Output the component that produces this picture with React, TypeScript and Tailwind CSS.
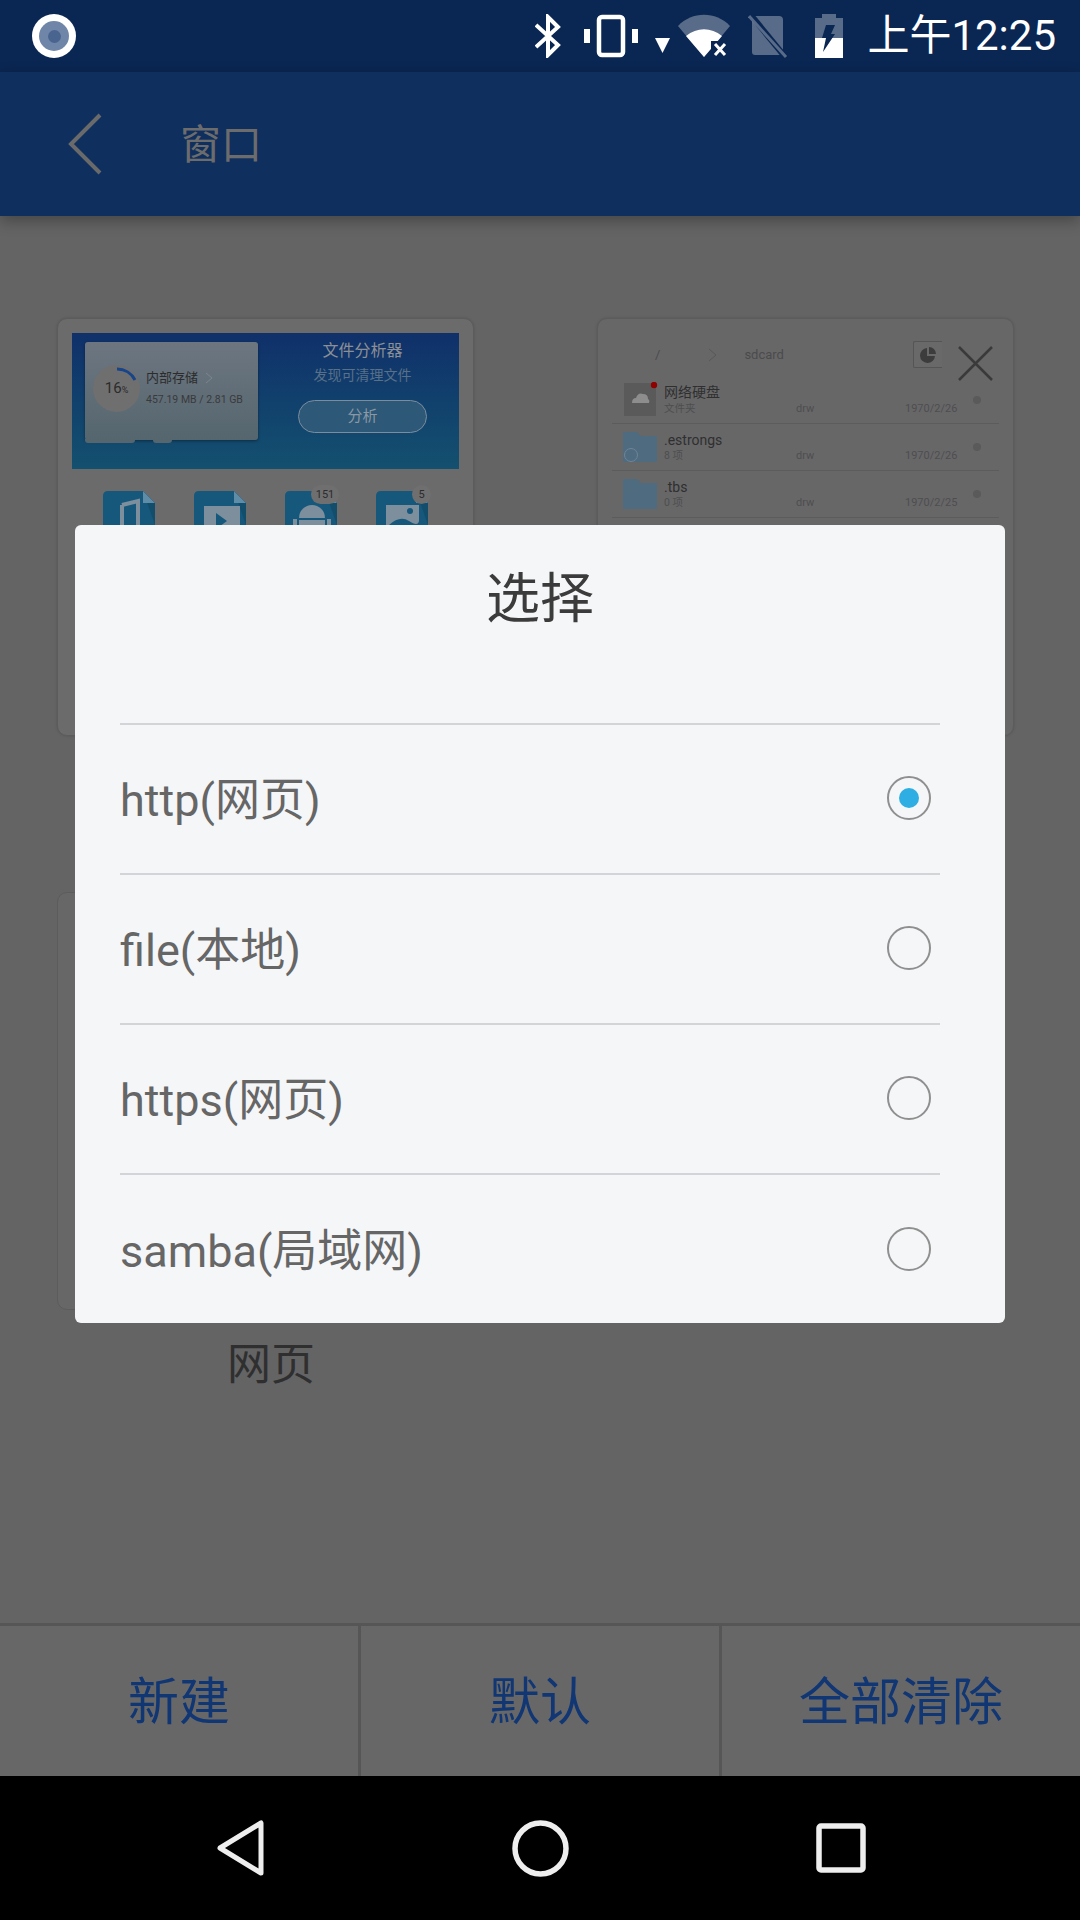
const cjk = "font-['Roboto','Noto_Sans_CJK_SC',sans-serif]";

const options = ['http(网页)', 'file(本地)', 'https(网页)', 'samba(局域网)'];

function StatusIcons() {
  return (
    <div className="flex items-center">
      {/* bluetooth */}
      <svg width="26" height="44" viewBox="0 0 26 44" className="mr-[23px]" fill="none" stroke="#fff" strokeWidth="4">
        <path d="M1 11 L23 31 L13 41 V3 L23 13 L1 33" />
      </svg>
      {/* vibrate */}
      <svg width="54" height="44" viewBox="0 0 54 44" className="mr-[17px]" fill="#fff">
        <rect x="0" y="15" width="6" height="14" />
        <rect x="48" y="15" width="6" height="14" />
        <rect x="15" y="3" width="24" height="38" rx="3" fill="none" stroke="#fff" strokeWidth="4.5" />
      </svg>
      {/* signal arrow */}
      <svg width="15" height="15" viewBox="0 0 15 15" className="mr-[8px] mt-[19px]" fill="#fff">
        <path d="M0 0 H15 L7.5 15 Z" />
      </svg>
      {/* wifi */}
      <svg width="52" height="44" viewBox="0 0 52 44" className="mr-[18px]">
        <path d="M0 12 C14 -3 38 -3 52 12 L26 43 Z" fill="#fff" fillOpacity="0.32" />
        <path d="M8 22 C19 13 33 13 44 22 L26 43 Z" fill="#fff" />
        <path d="M33 27 H52 V44 H33 Z" fill="#0a2652" />
        <path d="M37 30 L47 41 M47 30 L37 41" stroke="#fff" strokeWidth="3" />
      </svg>
      {/* sim */}
      <svg width="40" height="44" viewBox="0 0 40 44" className="mr-[27px]">
        <path d="M6 2 H31 Q35 2 35 6 V38 Q35 41 32 41 H7 Q4 41 4 38 V6 Z" fill="#fff" fillOpacity="0.32" />
        <path d="M2 0 L38 44" stroke="#0a2652" strokeWidth="6" />
        <path d="M1 2 L38 43" stroke="#fff" strokeOpacity="0.32" strokeWidth="3" />
      </svg>
      {/* battery */}
      <svg width="28" height="44" viewBox="0 0 28 44" className="mr-[24px]">
        <path d="M7 0 H21 V4 H28 V44 H0 V4 H7 Z" fill="#fff" fillOpacity="0.32" />
        <path d="M0 24 H28 V44 H0 Z" fill="#fff" />
        <path d="M11 11 H20 L16 20 H20 L8 38 L11 24 H7 Z" fill="#0a2652" />
      </svg>
      <span className={`text-[42px] leading-[44px] text-white ${cjk} whitespace-nowrap`}>上午12:25</span>
    </div>
  );
}

function FileTile({ children }: { children: React.ReactNode }) {
  return (
    <div className="relative w-[52px] h-[60px] overflow-hidden">
      <svg width="52" height="60" viewBox="0 0 52 60">
        <path d="M5 0 H40 L52 12 V60 H0 V5 Q0 0 5 0 Z" fill="#15587b" />
        <path d="M40 0 L52 12 V34 Z" fill="#134d6c" />
        <path d="M40 0 L52 12 H40 Z" fill="#5f8ca7" />
        {children}
      </svg>
    </div>
  );
}

function AnalyzerCard() {
  return (
    <div className="w-[417px] h-[418px] rounded-[10px] bg-[#6b6b6c] border border-[#5c5c5d] shadow-[0_0_3px_rgba(0,0,0,0.15)] px-[14px] py-[14px]">
      <div className="h-[136px] flex bg-gradient-to-b from-[#10306a] to-[#14506f] pl-[13px] pt-[9px]">
        <div className="relative shrink-0 w-[173px] h-[98px] rounded-[3px] bg-gradient-to-b from-[#6d7680] to-[#55666f] shadow-[0_1px_3px_rgba(0,0,0,0.4)] flex items-start pl-[8px] pt-[23px] gap-[6px]">
          <div className="absolute left-0 top-[97px] w-[50px] h-[4px] rounded-b-[3px] bg-[#55666f]" />
          <div className="absolute left-[68px] top-[97px] w-[19px] h-[4px] rounded-b-[3px] bg-[#55666f]" />
          <div className="w-[47px] h-[47px] rounded-full bg-[#6f6f70] flex items-center justify-center shrink-0 relative">
            <svg width="47" height="47" viewBox="0 0 47 47" className="absolute inset-0">
              <path d="M24 4 A20 20 0 0 1 42 15" fill="none" stroke="#16458c" strokeWidth="3" />
            </svg>
            <span className={`text-[15px] text-[#2b2b2b] ${cjk}`}>16<span className="text-[9px]">%</span></span>
          </div>
          <div className={cjk}>
            <div className="text-[13px] leading-[14px] mt-[6px] text-[#2c2c2c] whitespace-nowrap flex items-center">
              内部存储
              <svg width="8" height="12" viewBox="0 0 8 12" className="ml-[7px]" fill="none" stroke="#7c858f"><path d="M1 1 L7 6 L1 11" /></svg>
            </div>
            <div className="text-[10.5px] leading-[12px] mt-[9px] text-[#3a3a3a] whitespace-nowrap">457.19 MB / 2.81 GB</div>
          </div>
        </div>
        <div className={`w-[201px] shrink-0 pl-[8px] flex flex-col items-center ${cjk}`}>
          <div className="text-[16px] leading-[18px] text-[#8b8f95]">文件分析器</div>
          <div className="text-[14px] leading-[16px] mt-[7px] text-[#587088]">发现可清理文件</div>
          <div className="w-[129px] h-[33px] mt-[17px] shrink-0 rounded-full border border-[#7a8d9f] bg-[#2e5878] text-[15px] leading-[31px] text-center text-[#8a98a4]">分析</div>
        </div>
      </div>
      <div className="flex pl-[31px] gap-[39px] mt-[22px]">
        <FileTile><path d="M19 14 L35 10 V40 M19 14 V44" fill="none" stroke="#7d8f9d" strokeWidth="4" /></FileTile>
        <FileTile><rect x="10" y="15" width="36" height="30" fill="#7d8f9d" /><path d="M22 22 L33 30 L22 38 Z" fill="#15587b" /></FileTile>
        <div className="relative">
          <FileTile><path d="M14 27 A13 13 0 0 1 40 27 Z" fill="#7d8f9d" /><rect x="14" y="29" width="26" height="26" fill="#7d8f9d" /><rect x="8" y="28" width="4" height="18" fill="#7d8f9d" /><rect x="42" y="28" width="4" height="18" fill="#7d8f9d" /></FileTile>
          <span className={`absolute -top-[6px] left-[26px] w-[28px] h-[19px] rounded-full bg-[#6f6f70] text-[11px] leading-[19px] text-center text-[#2c2c2c] ${cjk}`}>151</span>
        </div>
        <div className="relative">
          <FileTile><rect x="10" y="14" width="33" height="46" fill="#7d8f9d" /><circle cx="34" cy="20" r="3" fill="#15587b" /><path d="M13 34 Q24 24 33 30 T43 30 V45 H13 Z" fill="#15587b" /></FileTile>
          <span className={`absolute -top-[6px] left-[36px] w-[19px] h-[19px] rounded-full bg-[#6f6f70] text-[11px] leading-[19px] text-center text-[#2c2c2c] ${cjk}`}>5</span>
        </div>
      </div>
    </div>
  );
}

function FileRow({ name, sub, date, folder, logo }: { name: string; sub: string; date: string; folder?: boolean; logo?: boolean }) {
  return (
    <div className="h-[47px] border-b border-[#5c5c5d] flex">
      <div className={`w-[52px] shrink-0 ${folder ? 'pl-[11px] pt-[8px]' : 'pl-[12px] pt-[5px]'}`}>
        {folder ? (
          <svg width="34" height="30" viewBox="0 0 34 30">
            <path d="M0 0 H14 L18 4 H34 V30 H0 Z" fill="#4f6b80" />
            {logo && <circle cx="8" cy="23" r="6.5" fill="none" stroke="#6f8497" strokeWidth="1" />}
          </svg>
        ) : (
          <svg width="36" height="36" viewBox="0 0 36 36">
            <rect y="1" width="32" height="33" fill="#5a5a5b" />
            <path d="M8 21 Q8 16 12 16 Q14 10 19 12 Q24 12 24 17 Q26 18 25 21 Z" fill="#8d8d8e" />
            <circle cx="30" cy="3" r="3.2" fill="#8f0000" />
          </svg>
        )}
      </div>
      <div className={`w-[132px] ${folder ? 'pt-[7px]' : 'pt-[6px]'} ${cjk}`}>
        <div className="text-[14px] leading-[18px] text-[#2f2f30] whitespace-nowrap">{name}</div>
        <div className={`text-[10.5px] leading-[14px] text-[#4e4e4f] ${folder ? '' : 'mt-[1px]'}`}>{sub}</div>
      </div>
      <div className={`w-[109px] pt-[25px] text-[11px] leading-[14px] text-[#4e4e4f] ${cjk}`}>drw</div>
      <div className={`w-[66px] pt-[25px] text-[11px] leading-[14px] text-[#4e4e4f] whitespace-nowrap ${cjk}`}>{date}</div>
      <div className="w-[8px] h-[8px] rounded-full bg-[#5a5a5b] ml-[2px] mt-[19px]" />
    </div>
  );
}

function BrowserCard() {
  return (
    <div className="relative w-[417px] h-[418px] rounded-[10px] bg-[#676768] border border-[#5c5c5d] shadow-[0_0_3px_rgba(0,0,0,0.15)] px-[14px] pt-[22px]">
      <div className={`flex items-center h-[27px] text-[13px] text-[#4b4b4c] ${cjk}`}>
        <span className="ml-[43px]">/</span>
        <svg width="10" height="14" viewBox="0 0 10 14" className="ml-[48px]" fill="none" stroke="#58585a"><path d="M1 1 L8 7 L1 13" /></svg>
        <span className="ml-[26px]">sdcard</span>
        <div className="ml-[129px] w-[29px] h-[27px] rounded-l-[2px] border border-r-0 border-[#555556] bg-[#69696a] flex items-center justify-center">
          <svg width="16" height="16" viewBox="0 0 16 16"><path d="M7 1 A7.5 7.5 0 1 0 15 9 H7 Z" fill="#3c3c3d" /><path d="M9 0 A7 7 0 0 1 16 7 H9 Z" fill="#3c3c3d" /></svg>
        </div>
      </div>
      <div className="absolute left-[360px] top-[27px]">
        <svg width="35" height="35" viewBox="0 0 35 35" stroke="#3a3a3b" strokeWidth="2.5"><path d="M1 1 L34 34 M34 1 L1 34" /></svg>
      </div>
      <div className="mt-[9px]">
        <FileRow name="网络硬盘" sub="文件夹" date="1970/2/26" />
        <FileRow name=".estrongs" sub="8 项" date="1970/2/26" folder logo />
        <FileRow name=".tbs" sub="0 项" date="1970/2/25" folder />
      </div>
    </div>
  );
}

function Radio({ checked }: { checked?: boolean }) {
  return (
    <div className="w-[44px] h-[44px] rounded-full border-2 border-[#8f8f8f] flex items-center justify-center">
      {checked && <div className="w-[20px] h-[20px] rounded-full bg-[#2eaee2]" />}
    </div>
  );
}

export default function App() {
  return (
    <div className={`relative w-[1080px] h-[1920px] overflow-hidden flex flex-col bg-[#646465] ${cjk}`}>
      <div className="h-[72px] bg-[#0a2652] flex items-center justify-between pl-[32px] pr-[24px] shrink-0">
        <div className="w-[44px] h-[44px] rounded-full bg-white flex items-center justify-center">
          <div className="w-[30px] h-[30px] rounded-full bg-[#6f86a8] flex items-center justify-center">
            <div className="w-[13px] h-[13px] rounded-full bg-[#49658f]" />
          </div>
        </div>
        <StatusIcons />
      </div>

      <div className="h-[144px] bg-[#0f2f5e] flex items-center shrink-0 shadow-[0_5px_14px_rgba(0,0,0,0.3)] relative z-10">
        <svg width="38" height="64" viewBox="0 0 38 64" className="ml-[66px]" fill="none" stroke="#6a6a6b" strokeWidth="4">
          <path d="M34 3 L5 32 L34 61" />
        </svg>
        <span className="ml-[76px] pt-[2px] text-[41px] leading-[48px] text-[#6c6c6d]">窗口</span>
      </div>

      <div className="flex-1 pt-[102px]">
        <div className="flex gap-[123px] pl-[57px]">
          <AnalyzerCard />
          <BrowserCard />
        </div>
        <div className="mt-[156px] pl-[57px]">
          <div className="w-[417px] h-[418px] rounded-[10px] border border-[#5c5c5d] bg-[#676768]" />
          <div className="w-[417px] pl-[11px] text-center text-[44px] leading-[56px] mt-[27px] text-[#2f2f30]">网页</div>
        </div>
      </div>

      <div className="h-[153px] shrink-0 border-t-[3px] border-[#565657] bg-[#676768] flex">
        {['新建', '默认', '全部清除'].map((label, i) => (
          <div key={label} className={`flex-1 flex items-center justify-center pt-[4px] text-[51px] text-[#113674] ${i < 2 ? 'border-r-[3px] border-[#565657]' : ''}`}>
            {label}
          </div>
        ))}
      </div>

      <div className="h-[144px] shrink-0 bg-black flex items-center pl-[217px]">
        <svg width="47" height="56" viewBox="0 0 47 56" fill="none" stroke="#eee" strokeWidth="5" strokeLinejoin="round">
          <path d="M44 3 V53 L3 28 Z" />
        </svg>
        <svg width="57" height="57" viewBox="0 0 57 57" className="ml-[248px]" fill="none" stroke="#eee" strokeWidth="5.5">
          <circle cx="28.5" cy="28.5" r="25.5" />
        </svg>
        <svg width="50" height="50" viewBox="0 0 50 50" className="ml-[247px]" fill="none" stroke="#eee" strokeWidth="5.5">
          <rect x="3" y="3" width="44" height="44" rx="2" />
        </svg>
      </div>

      <div className="absolute left-[75px] top-[525px] w-[930px] h-[798px] overflow-hidden rounded-[6px] bg-[#f5f6f8] pl-[45px] pr-[65px]">
        <div className="h-[200px] border-b-2 border-[#d3d4d7] text-center text-[54px] leading-[64px] pt-[43px] pl-[20px] text-[#3b3b3b]">选择</div>
        {options.map((opt, i) => (
          <div key={opt} className={`h-[150px] flex items-center justify-between ${i < 3 ? 'border-b-2 border-[#d3d4d7]' : ''}`}>
            <span className="pt-[3px] text-[45px] text-[#666666]">{opt}</span>
            <div className="mr-[9px] mb-[2px]"><Radio checked={i === 0} /></div>
          </div>
        ))}
      </div>
    </div>
  );
}
